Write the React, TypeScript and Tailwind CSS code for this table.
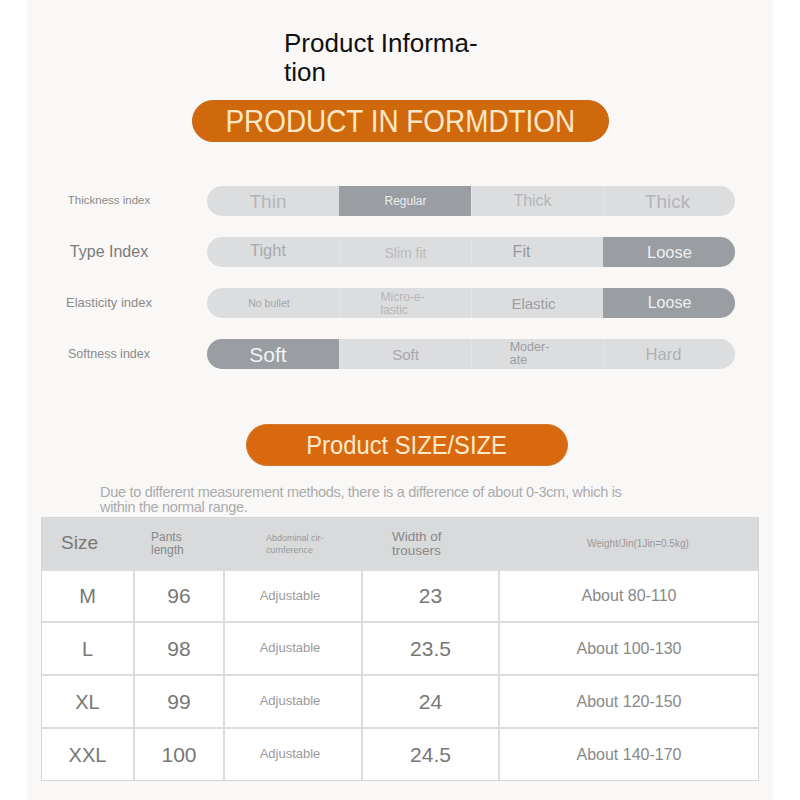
import React from "react";

type Seg = { t: React.ReactNode; cls: string; on?: boolean };

const rows: { label: string; lcls: string; segs: Seg[] }[] = [
  {
    label: "Thickness index",
    lcls: "text-[11.5px] text-[#8a8a8a]",
    segs: [
      { t: "Thin", cls: "text-[19px] text-[#b3b5b8] -ml-[10px]" },
      { t: "Regular", cls: "text-[12px] text-[#eceef0] -mt-[1px]", on: true },
      { t: "Thick", cls: "text-[16px] text-[#b3b5b8] -ml-[10px]" },
      { t: "Thick", cls: "text-[19px] text-[#b3b5b8] -ml-[4px]" },
    ],
  },
  {
    label: "Type Index",
    lcls: "text-[16px] text-[#7a7a7a]",
    segs: [
      { t: "Tight", cls: "text-[16.5px] text-[#a8aaad] -mt-[3px] -ml-[10px]" },
      { t: "Slim fit", cls: "text-[14px] text-[#b8babd] mt-[1px]" },
      { t: "Fit", cls: "text-[16px] text-[#97999c] -ml-[32px]" },
      { t: "Loose", cls: "text-[16.5px] text-[#eef0f2]", on: true },
    ],
  },
  {
    label: "Elasticity index",
    lcls: "text-[13px] text-[#8a8a8a]",
    segs: [
      { t: "No bullet", cls: "text-[10.5px] text-[#a3a5a8] -ml-[8px]" },
      {
        t: (
          <span className="block text-left leading-[13px] -ml-[6px]">
            Micro-e-
            <br />
            lastic
          </span>
        ),
        cls: "text-[12px] text-[#b3b5b8] mt-[2px]",
      },
      { t: "Elastic", cls: "text-[15px] text-[#9c9ea1] -ml-[8px]" },
      { t: "Loose", cls: "text-[16px] text-[#eef0f2]", on: true },
    ],
  },
  {
    label: "Softness index",
    lcls: "text-[12.5px] text-[#8a8a8a]",
    segs: [
      { t: "Soft", cls: "text-[21px] text-[#f1f2f4] -ml-[10px]", on: true },
      { t: "Soft", cls: "text-[15px] text-[#a6a8ab]" },
      {
        t: (
          <span className="block text-left leading-[13px] -ml-[16px]">
            Moder-
            <br />
            ate
          </span>
        ),
        cls: "text-[12.5px] text-[#9a9c9f]",
      },
      { t: "Hard", cls: "text-[16.5px] text-[#aeb0b3] -ml-[12px]" },
    ],
  },
];

const body = [
  { v: ["M", "96", "23", "About 80-110"], h: "h-[52px]" },
  { v: ["L", "98", "23.5", "About 100-130"], h: "h-[53px]" },
  { v: ["XL", "99", "24", "About 120-150"], h: "h-[53px]" },
  { v: ["XXL", "100", "24.5", "About 140-170"], h: "h-[53px]" },
];

export default function App() {
  return (
    <div
      className="w-[800px] h-[800px] bg-white flex justify-center overflow-hidden"
      style={{ fontFamily: '"Liberation Sans", Arial, sans-serif' }}
    >
      <div className="w-[746px] h-[800px] bg-[#f9f8f7] flex flex-col">
        {/* Title */}
        <div className="pl-[257px] pt-[29px] text-[26px] leading-[29px] text-[#111]">
          Product Informa-
          <br />
          tion
        </div>

        {/* Pill 1 */}
        <div className="mt-[13px] ml-[165px] w-[417px] h-[42px] rounded-full bg-[#d0680c] border border-[#c86a1a] flex items-center justify-center overflow-hidden">
          <span className="inline-block text-[31px] leading-none text-[#fde7c6] scale-x-[0.9] whitespace-nowrap">
            PRODUCT IN FORMDTION
          </span>
        </div>

        {/* Index rows */}
        <div className="mt-[44px] flex flex-col gap-[21px]">
          {rows.map((r, i) => (
            <div key={i} className="flex items-center h-[30px]">
              <div className={`ml-[22px] w-[120px] text-center whitespace-nowrap ${r.lcls}`}>
                {r.label}
              </div>
              <div className="ml-[38px] w-[528px] h-[30px] rounded-full bg-[#dcdddf] flex overflow-hidden">
                {r.segs.map((s, j) => (
                  <div
                    key={j}
                    className={`w-[132px] h-full flex items-center justify-center ${
                      j > 0 ? "border-l border-[#e4e5e7]" : ""
                    } ${s.on ? "bg-[#9a9da2] border-transparent" : ""}`}
                  >
                    <div className={`leading-none whitespace-nowrap ${s.cls}`}>{s.t}</div>
                  </div>
                ))}
              </div>
            </div>
          ))}
        </div>

        {/* Pill 2 */}
        <div className="mt-[55px] ml-[219px] w-[322px] h-[42px] rounded-full bg-[#d8690f] border border-[#cf7a30] flex items-center justify-center">
          <span className="inline-block text-[25px] leading-none text-[#fde9cb] scale-x-[0.95] whitespace-nowrap">
            Product SIZE/SIZE
          </span>
        </div>

        {/* Note */}
        <div className="mt-[19px] ml-[73px] w-[560px] text-[14.5px] leading-[15px] text-[#ababab] tracking-[-0.3px]">
          Due to different measurement methods, there is a difference of about 0-3cm, which is
          within the normal range.
        </div>

        {/* Table */}
        <div className="mt-[2px] ml-[14px] w-[718px] border border-[#d6d6d6] bg-white">
          <div className="h-[51px] bg-[#d9dadc] flex items-center text-[#777]">
            <div className="w-[91px] pl-[19px] text-[19px]">Size</div>
            <div className="w-[90px] pl-[18px] text-[12px] leading-[13px] text-[#888]">
              Pants
              <br />
              length
            </div>
            <div className="w-[138px] pl-[43px] text-[9px] leading-[12px] text-[#999]">
              Abdominal cir-
              <br />
              cumference
            </div>
            <div className="w-[137px] pl-[31px] text-[13.5px] leading-[14px] text-[#888]">
              Width of
              <br />
              trousers
            </div>
            <div className="flex-1 pl-[89px] text-[10px] text-[#999]">Weight/Jin(1Jin=0.5kg)</div>
          </div>
          {body.map((row, i) => {
            const b = row.v;
            return (
              <div key={i} className={`${row.h} flex border-t-2 border-[#dcdcdc]`}>
                <div className="w-[91px] flex items-center justify-center text-[20px] text-[#777]">
                  {b[0]}
                </div>
                <div className="w-[90px] border-l-2 border-[#dcdcdc] flex items-center justify-center text-[21px] text-[#777]">
                  {b[1]}
                </div>
                <div className="w-[138px] border-l-2 border-[#dcdcdc] flex items-center justify-center text-[13px] text-[#9a9a9a] -mt-[1px]">
                  <span className="-ml-[6px]">Adjustable</span>
                </div>
                <div className="w-[137px] border-l-2 border-[#dcdcdc] flex items-center justify-center text-[21px] text-[#777]">
                  {b[2]}
                </div>
                <div className="flex-1 border-l-2 border-[#dcdcdc] flex items-center justify-center text-[16px] text-[#888]">
                  {b[3]}
                </div>
              </div>
            );
          })}
        </div>
      </div>
    </div>
  );
}
